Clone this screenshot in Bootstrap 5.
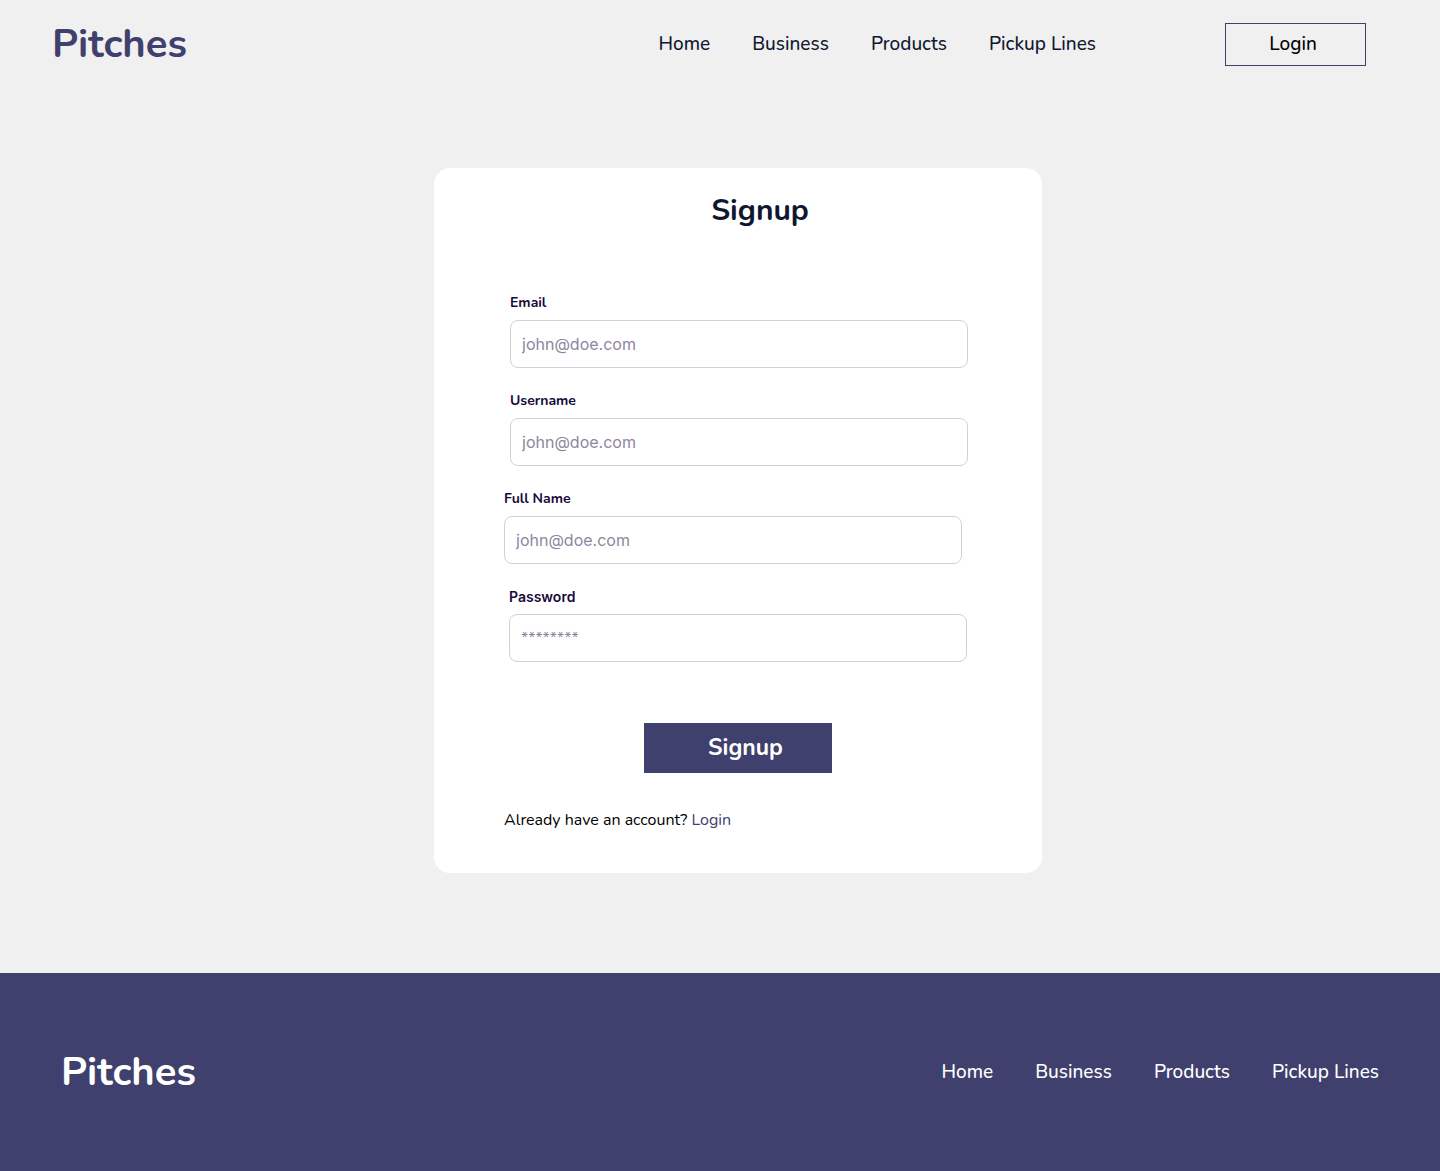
<!DOCTYPE html>
<html lang="en">
<head>
<meta charset="utf-8">
<meta name="viewport" content="width=device-width, initial-scale=1">
<title>Pitches - Signup</title>
<link href="https://cdn.jsdelivr.net/npm/bootstrap@5.3.0/dist/css/bootstrap.min.css" rel="stylesheet">
<style>
  :root { --brand: #3f406d; --ink: #0f172f; --page: #f0f0f0; }
  body { font-family: Nunito, Lato, sans-serif; background: var(--page); color: #000; }
  .site-header { padding: 22px 74px 22px 52px; }
  .brand-name { font-size: 40px; line-height: 44px; font-weight: 700; color: var(--brand); text-decoration: none; }
  .site-links { gap: 42px; font-size: 19px; line-height: 28px; font-weight: 500; }
  .site-links a { color: var(--ink); text-decoration: none; }
  .header-side { gap: 129px; }
  .btn-login { width: 141px; height: 43px; padding: 0 5px 0 0; border: 1px solid var(--brand); border-radius: 0; font-size: 19px; line-height: 28px; font-weight: 500; color: #000; }
  .signup-area { padding: 80px 0 100px 36px; }
  .signup-card { width: 608px; max-width: 100%; border: 0; border-radius: 16px; padding: 21px 70px 41px; }
  .signup-title { font-size: 30px; line-height: 44px; font-weight: 700; color: var(--ink); padding-left: 44px; margin-bottom: 60px; }
  .field-row { margin: 0 4px 23px 6px; }
  .field-row.flush { margin-left: 0; margin-right: 10px; }
  .field-row.secret { margin-left: 5px; margin-right: 5px; }
  .field-row label { display: block; font-size: 14px; line-height: 20px; font-weight: 700; color: #19093b; margin-bottom: 7px; }
  .field-row.secret label { font-family: Inter, sans-serif; font-weight: 600; }
  .field-row .form-control { height: 48px; padding: 0 11px; border: 1px solid #d0d0dc; border-radius: 8px; font-family: Inter, sans-serif; font-size: 16px; }
  .field-row.secret .form-control { font-family: Nunito, sans-serif; }
  .field-row .form-control::placeholder { color: #8c87a0; opacity: 1; }
  .btn-signup { width: 188px; height: 50px; padding: 0 0 0 15px; margin-top: 38px; border: 0; border-radius: 0; background: var(--brand); color: #fff; font-size: 23px; font-weight: 700; }
  .btn-signup:hover { background: #33345c; color: #fff; }
  .account-note { margin: 35px 0 0; font-size: 16px; line-height: 24px; }
  .account-note a { color: var(--brand); text-decoration: none; }
  .site-footer { background: var(--brand); padding: 77px 61px; }
  .site-footer a { color: #fff; }
</style>
</head>
<body class="d-flex flex-column min-vh-100">
<header class="site-header d-flex flex-wrap justify-content-between align-items-center">
  <a class="brand-name" href="#">Pitches</a>
  <div class="header-side d-flex flex-wrap align-items-center">
    <nav class="site-links d-flex flex-wrap" aria-label="Main">
      <a href="#">Home</a><a href="#">Business</a><a href="#">Products</a><a href="#">Pickup Lines</a>
    </nav>
    <button type="button" class="btn btn-login">Login</button>
  </div>
</header>
<main class="signup-area d-flex justify-content-center flex-grow-1">
  <form class="card signup-card">
    <h1 class="signup-title text-center">Signup</h1>
    <div class="field-row">
      <label for="email">Email</label>
      <input id="email" type="email" class="form-control" placeholder="john@doe.com">
    </div>
    <div class="field-row">
      <label for="username">Username</label>
      <input id="username" type="text" class="form-control" placeholder="john@doe.com">
    </div>
    <div class="field-row flush">
      <label for="fullname">Full Name</label>
      <input id="fullname" type="text" class="form-control" placeholder="john@doe.com">
    </div>
    <div class="field-row secret">
      <label for="password">Password</label>
      <input id="password" type="password" class="form-control" placeholder="********">
    </div>
    <button type="submit" class="btn btn-signup align-self-center">Signup</button>
    <p class="account-note">Already have an account? <a href="#">Login</a></p>
  </form>
</main>
<footer class="site-footer d-flex flex-wrap justify-content-between align-items-center">
  <a class="brand-name" href="#">Pitches</a>
  <nav class="site-links d-flex flex-wrap" aria-label="Footer">
    <a href="#">Home</a><a href="#">Business</a><a href="#">Products</a><a href="#">Pickup Lines</a>
  </nav>
</footer>
<script src="https://cdn.jsdelivr.net/npm/bootstrap@5.3.0/dist/js/bootstrap.bundle.min.js"></script>
</body>
</html>
